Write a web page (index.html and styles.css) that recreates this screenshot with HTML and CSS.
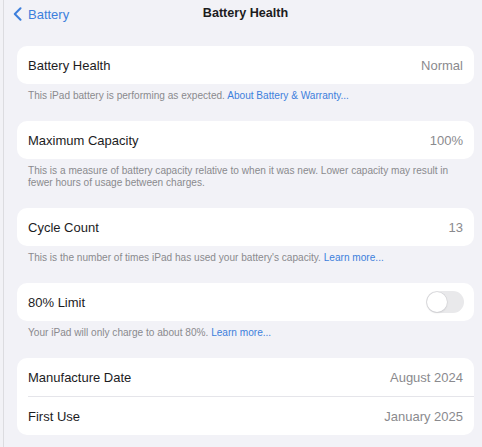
FILE: index.html
```html
<!DOCTYPE html>
<html>
<head>
<meta charset="utf-8">
<link rel="stylesheet" href="styles.css">
</head>
<body>
<div class="page">
  <div class="nav">
    <div class="back">
      <svg class="chev" width="9" height="14" viewBox="0 0 9 14"><path d="M7.5 1.2 L1.8 7 L7.5 12.8" fill="none" stroke="#3d7fdc" stroke-width="2" stroke-linecap="round" stroke-linejoin="round"/></svg>
      <span>Battery</span>
    </div>
    <div class="title">Battery Health</div>
  </div>

  <div class="group">
    <div class="card">
      <div class="row"><span class="label">Battery Health</span><span class="value">Normal</span></div>
    </div>
    <div class="foot">This iPad battery is performing as expected. <span class="link">About Battery &amp; Warranty...</span></div>
  </div>

  <div class="group">
    <div class="card">
      <div class="row"><span class="label">Maximum Capacity</span><span class="value">100%</span></div>
    </div>
    <div class="foot">This is a measure of battery capacity relative to when it was new. Lower capacity may result in fewer hours of usage between charges.</div>
  </div>

  <div class="group">
    <div class="card">
      <div class="row"><span class="label">Cycle Count</span><span class="value">13</span></div>
    </div>
    <div class="foot">This is the number of times iPad has used your battery's capacity. <span class="link">Learn more...</span></div>
  </div>

  <div class="group">
    <div class="card">
      <div class="row"><span class="label">80% Limit</span><span class="switch"><span class="knob"></span></span></div>
    </div>
    <div class="foot">Your iPad will only charge to about 80%. <span class="link">Learn more...</span></div>
  </div>

  <div class="group">
    <div class="card">
      <div class="row"><span class="label">Manufacture Date</span><span class="value">August 2024</span></div>
      <div class="divider"></div>
      <div class="row"><span class="label">First Use</span><span class="value">January 2025</span></div>
    </div>
  </div>
</div>
</body>
</html>
```

FILE: styles.css
```css
html, body {
  margin: 0;
  padding: 0;
}
body {
  background: #f2f2f6;
  font-family: "Liberation Sans", Arial, sans-serif;
  color: #1c1c1e;
  width: 482px;
  height: 447px;
  overflow: hidden;
}
.page {
  margin-left: 3px;
  border-left: 1px solid #dcdce0;
  height: 447px;
  padding: 0 8px 0 13px;
  box-sizing: border-box;
  background: #f2f2f7;
}
.nav {
  position: relative;
  height: 46px;
  display: flex;
  align-items: flex-start;
}
.back {
  display: flex;
  align-items: center;
  gap: 6px;
  color: #3d7fdc;
  font-size: 13px;
  margin-left: -4px;
  margin-top: 7px;
  height: 14px;
}
.title {
  position: absolute;
  left: 0;
  right: 0;
  top: 6px;
  text-align: center;
  font-weight: bold;
  font-size: 12.6px;
}
.group {
  margin-bottom: 19px;
}
.card {
  background: #fff;
  border-radius: 10px;
  overflow: hidden;
}
.row {
  height: 38px;
  display: flex;
  align-items: center;
  justify-content: space-between;
  padding: 0 11px;
  font-size: 13px;
}
.label {
  color: #1c1c1e;
}
.value {
  color: #8a8a8e;
}
.divider {
  height: 1px;
  background: #e5e5ea;
  margin-left: 11px;
}
.foot {
  font-size: 10.1px;
  color: #8a8a8e;
  padding: 6px 11px 0 11px;
  line-height: 12px;
}
.link {
  color: #3d7fdc;
}
.switch {
  width: 38px;
  height: 22px;
  border-radius: 11px;
  background: #e9e9eb;
  position: relative;
  margin-right: -1px;
}
.knob {
  position: absolute;
  left: 1px;
  top: 1px;
  width: 20px;
  height: 20px;
  border-radius: 50%;
  background: #fff;
  box-shadow: 0 0 0 0.5px #d0d0d4, 0 1px 2px rgba(0,0,0,0.12);
}
```
